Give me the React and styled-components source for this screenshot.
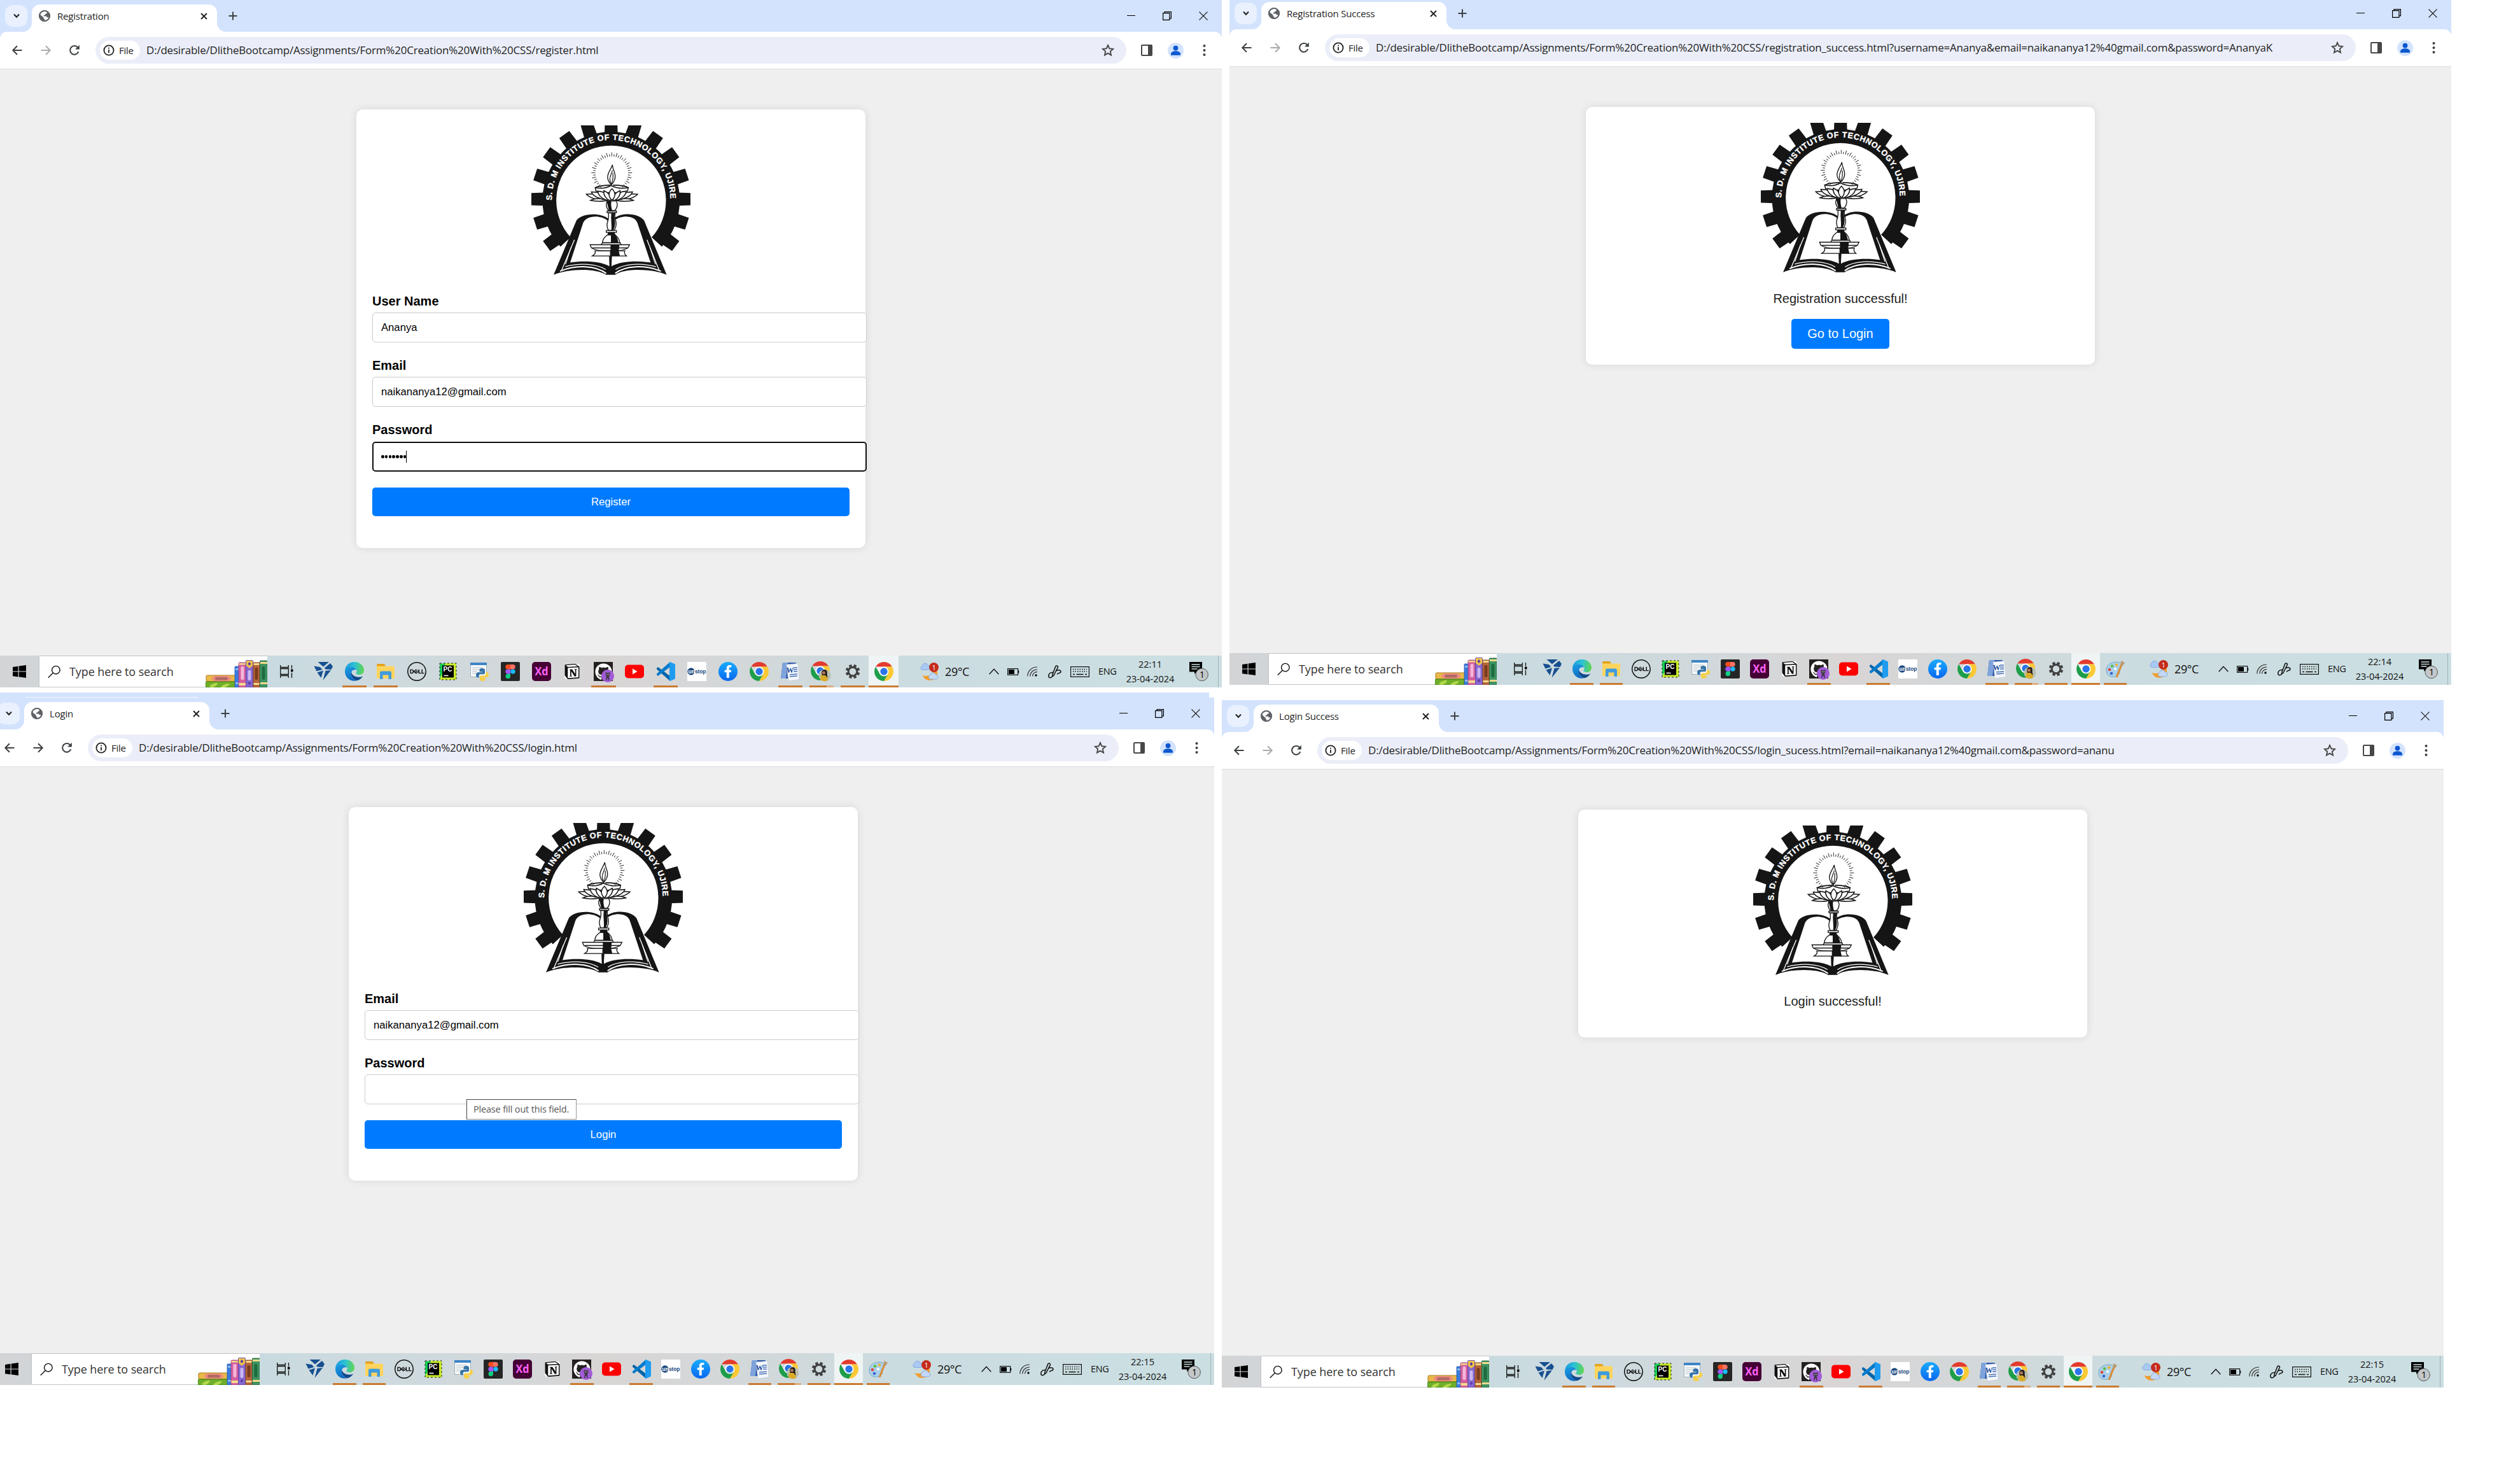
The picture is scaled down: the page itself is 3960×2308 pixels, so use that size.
import React from "react";
import styled, { createGlobalStyle, css } from "styled-components";
import { FaGithub, FaFacebookF } from "react-icons/fa";
import { SiDell, SiNotion } from "react-icons/si";

const ui = `"Open Sans", "Noto Sans", sans-serif`;
const arial = `"Liberation Sans", Arial, sans-serif`;

const Global = createGlobalStyle`
  html, body { margin: 0; background: #fff; overflow: hidden; }
  #root { width: 3960px; height: 2308px; }
`;

const Canvas = styled.main`
  position: relative;
  width: 3960px;
  height: 2308px;
  overflow: hidden;
  background: #fff;
`;

const Desktop = styled.section`
  position: absolute;
  left: ${(p) => p.$x}px;
  top: ${(p) => p.$y}px;
  width: 1920px;
  height: 1080px;
  display: flex;
  flex-direction: column;
  overflow: hidden;
  background: #efefef;
`;

const BackWindow = styled.div`
  position: absolute;
  left: -20px;
  top: 1088px;
  width: 1920px;
  height: 1000px;
  background: #d3e3fd;
`;

const BackTab = styled.div`
  margin: 7px 0 0 60px;
  width: 271px;
  height: 30px;
  background: #f1f6fe;
`;

const Header = styled.header`
  background: #d3e3fd;
  flex: none;
`;

const TabStrip = styled.div`
  display: flex;
  align-items: center;
  height: 50px;
  box-sizing: border-box;
  padding: 0 22px 0 8px;
`;

const TabSearch = styled.div`
  display: flex;
  align-items: center;
  justify-content: center;
  width: 35px;
  height: 34px;
  border-radius: 12px;
  background: #e9f1fe;
`;

const flare = css`
  content: "";
  position: absolute;
  bottom: 0;
  width: 15px;
  height: 15px;
`;

const Tab = styled.div`
  position: relative;
  display: flex;
  align-items: center;
  align-self: flex-end;
  box-sizing: border-box;
  width: 291px;
  height: 43px;
  margin-left: 7px;
  padding: 0 15px 7px 11px;
  border-radius: 13px 13px 0 0;
  background: #fff;
  &::before {
    ${flare}
    left: -15px;
    background: radial-gradient(circle at 0 0, transparent 15px, #fff 15.5px);
  }
  &::after {
    ${flare}
    right: -15px;
    background: radial-gradient(circle at 100% 0, transparent 15px, #fff 15.5px);
  }
`;

const TabTitle = styled.span`
  flex: 1;
  margin-left: 11px;
  font: 15px/20px ${ui};
  letter-spacing: -0.2px;
  color: #1f1f1f;
  white-space: nowrap;
`;

const NewTab = styled.div`
  display: flex;
  margin-left: 18px;
`;

const Controls = styled.div`
  display: flex;
  align-items: center;
  gap: 43px;
  margin-left: auto;
`;

const Toolbar = styled.div`
  display: flex;
  align-items: center;
  box-sizing: border-box;
  height: 59px;
  padding-left: 17px;
  border-radius: 11px 11px 0 0;
  border-bottom: 1px solid #dcdcdc;
  background: #fff;
`;

const NavIcons = styled.div`
  display: flex;
  flex: none;
  gap: 25px;
  width: 133px;
`;

const UrlBar = styled.div`
  display: flex;
  flex: none;
  align-items: center;
  box-sizing: border-box;
  width: 1620px;
  height: 42px;
  padding: 0 19px 0 7px;
  border-radius: 21px;
  background: #ebeef8;
`;

const Chip = styled.div`
  display: flex;
  align-items: center;
  gap: 7px;
  box-sizing: border-box;
  width: 63px;
  height: 30px;
  padding-left: 5px;
  border-radius: 15px;
  background: #fff;
  font: 15px/20px ${ui};
  letter-spacing: -0.3px;
  color: #1f1f1f;
`;

const Url = styled.span`
  flex: 1;
  margin-left: 10px;
  font: 17px/24px ${ui};
  letter-spacing: -0.205px;
  color: #1f1f1f;
  white-space: nowrap;
`;

const ToolIcons = styled.div`
  display: flex;
  flex: none;
  align-items: center;
  gap: 24px;
  margin-left: 23px;
`;

const Page = styled.div`
  display: flex;
  justify-content: center;
  align-items: flex-start;
  flex: 1;
  padding-top: 63px;
  background: #efefef;
`;

const Card = styled.div`
  position: relative;
  display: flex;
  flex-direction: column;
  align-items: ${(p) => (p.$center ? "center" : "stretch")};
  box-sizing: border-box;
  width: 800px;
  padding: 25px;
  border-radius: 10px;
  background: #fff;
  box-shadow: 0 0 13px rgba(0, 0, 0, 0.1);
`;

const LogoBox = styled.div`
  display: flex;
  justify-content: center;
  height: 235px;
  margin-bottom: 30px;
`;

const Field = styled.label`
  display: flex;
  flex-direction: column;
  margin-bottom: 25px;
  font: bold 20px/23px ${arial};
  color: #000;
`;

const Input = styled.span`
  display: flex;
  align-items: center;
  box-sizing: border-box;
  width: 777px;
  height: 47px;
  margin-top: ${(p) => (p.$focus ? 7 : 6)}px;
  padding-left: ${(p) => (p.$focus ? 12 : 13)}px;
  border: ${(p) => (p.$focus ? "2px solid #101010" : "1px solid #ccc")};
  border-radius: 5px;
  background: #fff;
  font: 16.67px/19px ${arial};
  color: #000;
`;

const Dots = styled.span`
  display: flex;
  gap: 1.2px;
  i {
    width: 4.6px;
    height: 4.6px;
    border-radius: 50%;
    background: #000;
  }
`;

const Caret = styled.span`
  width: 1px;
  height: 19px;
  background: #000;
`;

const Button = styled.div`
  display: flex;
  align-items: center;
  justify-content: center;
  box-sizing: border-box;
  height: ${(p) => (p.$link ? 47 : 45)}px;
  width: ${(p) => (p.$link ? "154px" : "auto")};
  padding-bottom: 1px;
  margin-bottom: ${(p) => (p.$link ? 0 : 25)}px;
  border-radius: 5px;
  background: #007bff;
  color: #fff;
  font: ${(p) => (p.$link ? "20px/23px" : "16.67px/19px")} ${arial};
`;

const Message = styled.p`
  margin: 0 0 20px;
  font: 20px/23px ${arial};
  color: #222;
`;

const Tooltip = styled.div`
  position: absolute;
  left: 185px;
  top: 459px;
  display: flex;
  align-items: center;
  box-sizing: border-box;
  width: 173px;
  height: 32px;
  padding: 0 0 1px 10px;
  border: 1px solid;
  border-color: #444 #999 #888 #444;
  background: #fff;
  font: 14.5px/20px ${ui};
  letter-spacing: -0.18px;
  color: #575757;
  white-space: nowrap;
`;

const Taskbar = styled.footer`
  display: flex;
  flex: none;
  height: 50px;
  background: linear-gradient(
    90deg,
    #d3d4d6 0,
    #d1d5d8 60px,
    #c9dbe0 420px,
    #cfd9dd 700px,
    #d9d5d5 960px,
    #d2d8da 1200px,
    #cbdce0 1420px,
    #cbdfe2 1920px
  );
`;

const Start = styled.div`
  display: flex;
  align-items: center;
  width: 61px;
  box-sizing: border-box;
  padding-left: 20px;
`;

const Search = styled.div`
  display: flex;
  align-items: center;
  box-sizing: border-box;
  width: 359px;
  border: 1px solid #c2c2c2;
  border-right: 0;
  padding-left: 13px;
  background: #fff;
  font: 18px/24px ${ui};
  letter-spacing: -0.1px;
  color: #333;
  white-space: nowrap;
`;

const SearchText = styled.span`
  flex: none;
  width: 214px;
  margin-left: 14px;
`;

const TaskView = styled.div`
  display: flex;
  align-items: center;
  width: ${(p) => p.$w}px;
  box-sizing: border-box;
  padding-left: ${(p) => p.$pad}px;
`;

const Apps = styled.div`
  display: flex;
  width: ${(p) => p.$w}px;
`;

const AppSlot = styled.div`
  display: flex;
  align-items: center;
  justify-content: center;
  position: relative;
  flex: none;
  width: ${(p) => p.$w}px;
`;

const IconPlate = styled.div`
  display: flex;
  align-items: center;
  justify-content: center;
  width: ${(p) => (p.$on ? "96%" : "100%")};
  height: 50px;
  background: ${(p) => (p.$on ? "rgba(255,255,255,0.68)" : "transparent")};
`;

const Running = styled.div`
  position: absolute;
  bottom: 0;
  left: ${(p) => (p.$wide ? "2%" : "11%")};
  right: ${(p) => (p.$wide ? "2%" : "11%")};
  height: 3px;
  background: ${(p) =>
    p.$stack ? "linear-gradient(90deg,#ca7a2e 72%,#dcae84 72%)" : "#ca7a2e"};
`;

const Tray = styled.div`
  display: flex;
  align-items: center;
  flex: 1;
`;

const Cell = styled.div`
  display: flex;
  align-items: center;
  flex: none;
  box-sizing: border-box;
  width: ${(p) => p.$w}px;
  padding-left: ${(p) => p.$pad || 0}px;
  white-space: nowrap;
  color: #111;
  font: ${(p) => p.$fs || 15}px/20px ${ui};
  letter-spacing: -0.4px;
`;

const Clock = styled.div`
  display: flex;
  flex: none;
  flex-direction: column;
  align-items: center;
  width: 91px;
  font: 14.5px/23px ${ui};
  color: #111;
`;

const TrayEdge = styled.div`
  width: 1px;
  height: 50px;
  background: #9fb0b3;
`;

/* ---------- browser icons ---------- */

const Svg = ({ w, h, vb, children, ...r }) => (
  <svg width={w} height={h} viewBox={vb || `0 0 ${w} ${h}`} fill="none" display="block" flexShrink="0" {...r}>
    {children}
  </svg>
);

const ChevronDown = () => (
  <Svg w={12} h={8}><path d="M2 1.5 6 5.7 10 1.5" stroke="#1f1f1f" strokeWidth="2" /></Svg>
);
const Globe = () => (
  <Svg w={18} h={18}>
    <circle cx="9" cy="9" r="9" fill="#5f6368" />
    <path d="M7.6 1.9C10.4 1.4 12 2 13 3.4c-.2 1.700-1.200 2.400-2.700 2.600-.2 1.700-1.300 1.700-2.600 1.800v1.700h3.700c1.100.3 1.300 1.100 1.200 2 1.400 0 2-.5 2.800.2-1.100 2.700-3.300 4.200-6 4.500v-1.900c-1.500-.1-2-.9-1.900-2.800L2 6.900C2.700 4.300 4.800 2.300 7.600 1.900Z" fill="#fff" />
    <circle cx="9" cy="9" r="8" stroke="#5f6368" strokeWidth="2" />
    <path d="M2 7.500 7.500 12.600V15C4.500 14.600 1.600 11.600 2 7.500Z" fill="#5f6368" />
  </Svg>
);
const Cross = () => (
  <Svg w={11} h={11}><path d="m1 1 9 9M10 1 1 10" stroke="#1f1f1f" strokeWidth="1.900" /></Svg>
);
const Plus = () => (
  <Svg w={14} h={14}><path d="M7 .5v13M.5 7h13" stroke="#3c4043" strokeWidth="2" /></Svg>
);
const Minimize = () => (
  <Svg w={13} h={14}><path d="M0 6.500h13" stroke="#000" /></Svg>
);
const Restore = () => (
  <Svg w={14} h={14}><path d="M.6 2.600h10.300v10.800H.6zM3 2.500V.6h10.400v10.300h-2.400" stroke="#000" strokeWidth="1.200" /></Svg>
);
const CloseWin = () => (
  <Svg w={14} h={14}><path d="m.5.5 13 13M13.500.5l-13 13" stroke="#222" strokeWidth="1.100" /></Svg>
);
const Arrow = ({ flip, color }) => (
  <Svg w={20} h={20}>
    <path transform={flip ? "translate(20 0) scale(-1 1)" : undefined} d="M17.500 10H3.500M10 3.300 3.300 10l6.700 6.700" stroke={color} strokeWidth="2" />
  </Svg>
);
const Reload = () => (
  <Svg w={20} h={20}>
    <path d="M16.300 12.200A6.800 6.800 0 1 1 15.300 5.600L16.600 7.300" stroke="#3c4043" strokeWidth="2.100" />
    <path d="M17.800 1.800v6.700h-6.700z" fill="#3c4043" />
  </Svg>
);
const Info = () => (
  <Svg w={18} h={18}>
    <circle cx="9" cy="9" r="7.600" stroke="#1f1f1f" strokeWidth="1.800" />
    <path d="M9 8v5M9 4.700v1.900" stroke="#1f1f1f" strokeWidth="1.800" />
  </Svg>
);
const Star = () => (
  <Svg w={20} h={20}>
    <path d="m10 2 2.400 5.300 5.700.6-4.300 3.900 1.200 5.700-5-2.900-5 2.900 1.200-5.700L1.900 7.900l5.700-.6z" stroke="#474747" strokeWidth="1.900" />
  </Svg>
);
const SidePanel = () => (
  <Svg w={18} h={18}>
    <rect x="1" y="1" width="16" height="16" rx="1" stroke="#474747" strokeWidth="2" />
    <path d="M11 0h6v18h-6z" fill="#474747" />
  </Svg>
);
const Avatar = () => (
  <Svg w={25} h={25}>
    <circle cx="12.500" cy="12.500" r="12.500" fill="#d3e3fd" />
    <circle cx="12.500" cy="8.600" r="3.900" fill="#0b57d0" />
    <path d="M5 19.800v-2.300c0-2.900 4-4.300 7.500-4.300s7.500 1.400 7.500 4.300v2.300z" fill="#0b57d0" />
  </Svg>
);
const Menu = () => (
  <Svg w={17} h={20}>
    {[3, 10, 17].map((y) => <circle key={y} cx="8.500" cy={y} r="2" fill="#3c4043" />)}
  </Svg>
);

/* ---------- institute emblem ---------- */

const ink = "#151515";
const teeth = Array.from({ length: 15 }, (_, i) => (i - 7) * 18);
const rays = Array.from({ length: 48 }, (_, i) => i).filter((i) => i < 20 || i > 28);

const Emblem = () => (
  <Svg w={250} h={235} vb="45 51 750 704">
    <defs><path id="ringText" d="M142.060 404A279 279 0 1 1 699.940 404" /></defs>
    {teeth.map((a) => (
      <path key={a} d="M390 88 392 22H450L452 88Z" fill={ink} transform={`rotate(${a} 421 398)`} />
    ))}
    <path d="M206 600A291 291 0 1 1 636 600" stroke={ink} strokeWidth="65" />
    <text fill="#fff" stroke="#fff" strokeWidth="1" fontFamily="Liberation Sans, Arial, sans-serif" fontWeight="700" fontSize="38">
      <textPath href="#ringText" textLength="880" lengthAdjust="spacing">S. D. M INSTITUTE OF TECHNOLOGY, UJIRE</textPath>
    </text>

    {/* halo and flame */}
    {rays.map((i) => (
      <path key={i} d={i % 2 ? "M424 197V186" : "M424 197V178"} stroke={ink} strokeWidth="2.600"
        transform={`rotate(${i * 7.5} 424 274)`} />
    ))}
    <path d="M427 236C420 262 400 275 405 302C408 316 416 324 422 331C432 320 442 306 440 287C438 268 428 258 427 236Z" fill="#fff" stroke={ink} strokeWidth="4" />
    <path d="M427 262C424 280 414 290 415 305C416 315 420 322 422 328M424 326C430 305 431 290 429 275" stroke={ink} strokeWidth="3.500" />

    {/* oil bowl */}
    <path d="M346 344C370 333 395 333 418 332M430 332C460 332 485 334 502 344" stroke={ink} strokeWidth="5" />
    <path d="M346 344C375 350 400 346 420 334C445 346 475 350 502 344L498 360C475 370 380 370 350 360Z" fill="#fff" stroke={ink} strokeWidth="4.500" />

    {/* lotus */}
    {[-1, 1].map((s) => (
      <g key={s} transform={`translate(425 0) scale(${s} 1)`} fill="#fff" stroke={ink} strokeWidth="4.500">
        <path d="M20 396C60 372 95 372 121 375C105 392 65 405 25 405Z" />
        <path d="M18 398C35 395 80 392 102 404C80 410 40 410 18 403Z" />
        <path d="M14 398C35 372 65 364 97 364C90 385 55 400 20 403Z" />
        <path d="M8 400C18 374 40 362 66 360C66 382 42 400 16 404Z" />
        <path d="M4 400C6 380 20 366 38 358C42 378 30 396 10 405Z" />
      </g>
    ))}
    <path d="M425 349C408 365 406 385 425 404C444 385 442 365 425 349Z" fill="#fff" stroke={ink} strokeWidth="4.500" />

    {/* book */}
    <path d="M150 755 257 500C275 466 370 456 413 494H429C465 456 555 464 577 500L683 755C620 725 480 722 440 755H398C350 722 215 725 150 755Z" fill={ink} />
    <path d="M228 697 288 513C300 474 370 470 404 499L414 715C370 690 290 688 228 697Z" fill="#fff" />
    <path d="M607 697 546 513C536 474 470 470 436 499L422 715C465 690 545 688 607 697Z" fill="#fff" />
    <path d="M187 735 248 590M648 735 590 590" stroke="#fff" strokeWidth="4" />
    <path d="M206 705 232 625M630 705 604 625" stroke="#fff" strokeWidth="3.500" />
    <path d="M180 738C260 705 350 712 398 748M656 738C580 705 485 712 440 748" stroke="#fff" strokeWidth="6" />
    <path d="M205 716C275 698 350 702 396 730M632 716C560 698 485 702 442 730" stroke="#fff" strokeWidth="4" />
    <path d="M418 660V740" stroke={ink} strokeWidth="10" />

    {/* lamp stem */}
    <g stroke={ink} strokeWidth="4">
      <path d="M402 407H446L450 420C450 440 442 448 438 452H410C402 444 398 436 398 422Z" fill="#fff" />
      <path d="M402 410C408 425 408 440 414 452H424C420 440 418 420 420 408Z" fill={ink} />
      <path d="M402 454H446V462H402Z" fill="#fff" />
      <path d="M408 463H440C436 480 440 490 444 505C448 525 440 535 436 545H408C400 530 400 515 406 500C410 488 410 478 408 463Z" fill="#fff" />
      <path d="M424 465H436C432 485 438 495 438 512C438 526 434 536 430 543H424C428 520 420 500 424 465Z" fill={ink} />
      <path d="M398 546H446V555H398Z" fill="#fff" />
      <path d="M408 556H436L438 565H406Z" fill={ink} />
      <path d="M403 567H441C455 580 462 590 462 604H380C380 590 388 578 403 567Z" fill="#fff" />
      <path d="M422 567H438C450 580 452 592 453 604H422Z" fill={ink} />
      <path d="M380 604H464L468 614H374Z" fill="#fff" />
      <path d="M322 613H508L500 628C480 640 460 642 440 642H395C365 642 345 638 328 628Z" fill="#fff" />
      <path d="M420 614H458L455 641H420Z" fill={ink} />
      <path d="M332 628H500" />
      <path d="M345 642H486C480 652 486 658 494 666H332C344 658 350 652 345 642Z" fill="#fff" />
      <path d="M418 643H455L460 664H418Z" fill={ink} />
    </g>
  </Svg>
);

/* ---------- taskbar icons ---------- */

const WinLogo = () => (
  <Svg w={21} h={20}>
    <path d="M0 3 8.500 1.700V9.500H0zM9.700 1.500 21 0v9.500H9.700zM0 10.600h8.500v7.900L0 17.200zM9.700 10.600H21V20L9.700 18.500z" fill="#000" />
  </Svg>
);
const Magnifier = () => (
  <Svg w={21} h={21}>
    <circle cx="13.500" cy="7.500" r="6.600" stroke="#111" strokeWidth="1.500" />
    <path d="M8.700 12.300.8 20.200" stroke="#111" strokeWidth="1.500" />
  </Svg>
);
const BooksBox = styled.div`
  display: flex;
  flex: none;
  align-self: flex-end;
  margin-bottom: -1px;
`;
const Books = () => (
  <BooksBox>
    <Svg w={97} h={43}>
      <rect x="1" y="24" width="46" height="10" rx="2" fill="#e9b949" stroke="#a87a1e" />
      <path d="M9 29 14 25H36L41 29 36 33.500H14Z" fill="#f08a80" />
      <rect x="15" y="27" width="20" height="4.500" rx="2" fill="#b06a62" />
      <rect x="0" y="34" width="47" height="9" rx="2" fill="#6fae2a" stroke="#3d7a14" />
      <path d="M6 42C9 37 15 36 19 36 18 40 14 43 10 43ZM24 43C27 38 33 37 38 37 36 41 32 43 28 43Z" fill="#b2d84a" />
      <rect x="46" y="10" width="6.500" height="33" rx="1" fill="#3a7de0" stroke="#1e4fa0" strokeWidth=".7" />
      <path d="M47 13h5v3h-5zM47 35h5v3h-5z" fill="#8db8f4" />
      <rect x="52" y="4" width="11.500" height="39" rx="1.500" fill="#d45fa0" stroke="#923a6c" strokeWidth=".8" />
      <path d="M52.500 5h10.500v2.500h-10.500zM52.500 36h10.500v4h-10.500z" fill="#f4d98b" />
      <rect x="55.500" y="10" width="5" height="21" rx="2" fill="#f5b5d8" />
      <rect x="63.500" y="0.500" width="11" height="42.500" rx="1" fill="#8666cf" stroke="#5b3da2" strokeWidth=".8" />
      <path d="M64 1h10v8l-5 4-5-4z" fill="#f0c34a" />
      <path d="m69 3 2.500 3L69 9l-2.500-3zM69 34l2.500 2.500-2.500 2.500-2.500-2.500z" fill="#5b3da2" />
      <rect x="66.500" y="16" width="5" height="16" rx="2" fill="#c9b6f2" />
      <rect x="75" y="4" width="10" height="39" rx="1" fill="#b7653a" stroke="#7c3d1c" strokeWidth=".8" />
      <path d="M75.500 5h9v3h-9zM75.500 36h9v3h-9z" fill="#f4d98b" />
      <rect x="77.500" y="12" width="5" height="19" rx="2" fill="#7a3c1e" />
      <rect x="85.500" y="1" width="11.500" height="42" rx="1" fill="#3d9462" stroke="#1e5d38" strokeWidth=".8" />
      <path d="M86 3h11v3H86zM86 35h11v3H86z" fill="#f4d98b" />
      <rect x="88.500" y="10" width="5" height="21" rx="2" fill="#1f6b40" />
    </Svg>
  </BooksBox>
);
const TaskViewIcon = () => (
  <Svg w={21} h={20}>
    <path d="M.7 0v3.500h12.600V0M.7 20v-3.500h12.600V20M.7 5.500h12.600v9H.7zM18.500 0v5.500M18.500 12v8" stroke="#111" strokeWidth="1.300" />
    <path d="M17 6.500h3.500v4H17z" fill="#000" />
  </Svg>
);
const Shield = () => (
  <Svg w={30} h={30}>
    <path d="M6.500 0H24L15 7.500ZM26 2l4 5-2.500 5-9-.5L17 9.500ZM.5 6.500 10 8l3.500 4L4.500 14.500ZM5.500 16.500 15 13.500 11.500 25ZM18.500 14l8.500-1L14.500 29Z" fill="#174f90" />
  </Svg>
);
const Edge = () => (
  <Svg w={30} h={30} vb="0 0 32 32">
    <defs>
      <linearGradient id="edgeWave" x1="0" y1="8" x2="32" y2="12" gradientUnits="userSpaceOnUse"><stop stopColor="#1f9be0" /><stop offset=".5" stopColor="#2cc3d2" /><stop offset="1" stopColor="#62d64e" /></linearGradient>
      <linearGradient id="edgeBody" x1="4" y1="8" x2="16" y2="32" gradientUnits="userSpaceOnUse"><stop stopColor="#1b9de2" /><stop offset="1" stopColor="#0b63bf" /></linearGradient>
    </defs>
    <path d="M0 16C0 6 7 0 16 0s16 6.500 16 13.500c0 5-3.500 8-8 8-4 0-5.500-1.500-5.500-2.500s1.500-1.500 1.500-4c0-3-3-5.500-8-5.500C5 9.500 1 12.500 0 16Z" fill="url(#edgeWave)" />
    <path d="M0 16c.5-5 5-8 10-7.500 5 0 8 2 9.500 5-5-1.500-9 1-9 6.500 0 6 5 11 10 11.300C9 34 0 26 0 16Z" fill="url(#edgeBody)" />
    <path d="M11 17c-2 7 3 13 9.500 14.300 4-1 7.500-4 9.500-7.300-2 1-4.500 1.500-7.500 1.300C16 25 11.500 21.500 11 17Z" fill="#114a8b" />
  </Svg>
);
const Folder = () => (
  <Svg w={28} h={24}>
    <path d="M0 1.500Q0 0 1.500 0H12l2 4H0z" fill="#e3a21a" />
    <path d="M0 3.500h26q2 0 2 2V22q0 1-1 1H1q-1 0-1-1z" fill="#ffd45e" />
    <path d="M5 24V14q0-2.500 2.500-2.500h13Q23 11.500 23 14v10h-4.500v-6.500h-9V24z" fill="#3f9bdc" />
  </Svg>
);
const DellIcon = () => <SiDell size={30} color="#111" />;
const PyCharm = () => (
  <Svg w={28} h={28}>
    <path d="M1 2h12L5 26H1z" fill="#21d789" /><path d="M8 1h19v26H1z" fill="#c9ea2c" /><path d="M1 2l9-1-6 20-3 1z" fill="#19cf54" />
    <rect x="1" y="1" width="26" height="26" stroke="#1c2a10" strokeDasharray="3 3" />
    <rect x="5" y="4.500" width="18" height="19" fill="#000" />
    <text x="6.500" y="14" fontFamily="Liberation Sans, Arial, sans-serif" fontWeight="700" fontSize="10" fill="#fff">PC</text>
    <path d="M7.500 20.500h7" stroke="#fff" strokeWidth="1.600" />
  </Svg>
);
const PyFile = () => (
  <Svg w={30} h={29}>
    <rect x="1.500" y=".5" width="25" height="22" fill="#f5f7f8" stroke="#9fb3c1" />
    <path d="M1 0h26v4H1z" fill="#3d84c6" />
    <path d="M4 8h17M4 11h14M4 14h7M4 17h6" stroke="#b9c4cc" />
    <path d="M19.500 9c-3 0-4 1-4 3v2.500h5v.8h-7c-2.500 0-3.500 2-3.500 4.200s1 4 3 4h1.500v-2.500c0-1.500 1-2.700 2.700-2.700h4.600c1.300 0 2.200-1 2.200-2.300V12c0-2-1.500-3-4.500-3z" fill="#3572a5" />
    <path d="M20.500 29c3 0 4-1 4-3v-2h-5v-.8h7c2.500 0 3.500-2 3.500-4s-1-4-3-4h-1.500v2.500c0 1.500-1 2.700-2.700 2.700h-4.600c-1.300 0-2.200 1-2.200 2.300V26c0 2 1.500 3 4.500 3z" fill="#f7d044" />
  </Svg>
);
const Figma = () => (
  <Svg w={30} h={30}>
    <rect width="30" height="30" rx="2" fill="#262626" />
    <path d="M15 4h-4a3.700 3.700 0 0 0 0 7.400h4z" fill="#f24e1e" /><path d="M15 4h4a3.700 3.700 0 0 1 0 7.400h-4z" fill="#ff7262" />
    <path d="M15 11.400h-4a3.700 3.700 0 0 0 0 7.400h4z" fill="#a259ff" /><circle cx="19" cy="15.100" r="3.700" fill="#1abcfe" />
    <path d="M11 18.800h4v3.700a3.700 3.700 0 1 1-4-3.700z" fill="#0acf83" />
  </Svg>
);
const Xd = () => (
  <Svg w={30} h={30}>
    <rect width="30" height="30" rx="5" fill="#450135" />
    <text x="15" y="21.300" textAnchor="middle" fontFamily="Open Sans, sans-serif" fontWeight="700" fontSize="17" fill="#ff61f6" textLength="21" lengthAdjust="spacingAndGlyphs">Xd</text>
  </Svg>
);
const NotionPlate = styled.div`
  display: flex;
  border-radius: 4px;
  background: #fff;
`;
const Notion = () => <NotionPlate><SiNotion size={24} color="#111" /></NotionPlate>;
const GhBox = styled.div`
  position: relative;
  display: flex;
  align-items: center;
  justify-content: center;
  width: 30px;
  height: 30px;
  background: #24201f;
`;
const GhBadge = styled.div`
  position: absolute;
  right: -2px;
  bottom: -2px;
  width: 20px;
  height: 20px;
  display: flex;
  align-items: center;
  justify-content: center;
  border-radius: 50%;
  background: #a25bd8;
`;
const GitHub = () => (
  <GhBox>
    <FaGithub size={27} color="#fff" />
    <GhBadge>
      <Svg w={12} h={15}>
        <path d="M2.500 1 4.500 2h3l2-1v5L8 7.500l1 6.500H7v-3H5v3H3l1-6.500L2.500 6z" fill="#453a4b" />
        <path d="M3.800 4.500h1.700M6.500 4.500h1.700" stroke="#c9c0d0" />
      </Svg>
    </GhBadge>
  </GhBox>
);
const YouTube = () => (
  <Svg w={30} h={22}>
    <rect width="30" height="21" y=".5" rx="5" fill="#f00" /><path d="m12 6.500 7.500 4.500L12 15.500z" fill="#fff" />
  </Svg>
);
const VsCode = () => (
  <Svg w={30} h={30}>
    <path d="M1 9.500 3 8l20 15-1 7L1 11.500z" fill="#0065a9" /><path d="M1 20.500 3 22 23 7l-1-7L1 18.500z" fill="#007acc" />
    <path d="M22 0 30 3.500v23L22 30c-.5 0-1-.5-1-1V1c0-.5.500-1 1-1z" fill="#1f9cf0" />
  </Svg>
);
const Unstop = () => (
  <Svg w={30} h={30}>
    <path d="M0 0h30v30H0z" fill="#fff" /><circle cx="6" cy="15" r="5.700" fill="#1c4980" />
    <text x="1.500" y="17.500" fontFamily="Liberation Sans, Arial, sans-serif" fontWeight="700" fontSize="8.500" fill="#fff">un</text>
    <text x="12" y="17.500" fontFamily="Liberation Sans, Arial, sans-serif" fontWeight="700" fontSize="8.500" fill="#1c4980" textLength="17.500">stop</text>
  </Svg>
);
const FbCircle = styled.div`
  display: flex;
  align-items: flex-end;
  justify-content: center;
  box-sizing: border-box;
  width: 30px;
  height: 30px;
  padding-bottom: 5px;
  border-radius: 50%;
  background: linear-gradient(#19acfe, #0866ef);
`;
const Facebook = () => <FbCircle><FaFacebookF size={20} color="#fff" /></FbCircle>;
const ChromeArt = () => (
  <>
    <path d="M2.010 7.500A15 15 0 0 1 27.990 7.500H15Z" fill="#e33b2e" />
    <path d="M27.990 7.500A15 15 0 0 1 15 30L21.500 18.750 15 7.500Z" fill="#fcc934" />
    <path d="M2.010 7.500A15 15 0 0 0 15 30L21.500 18.750H8.500Z" fill="#1e9e4a" />
    <circle cx="15" cy="15" r="7.500" fill="#fff" /><circle cx="15" cy="15" r="5.700" fill="#2a75e8" />
  </>
);
const Chrome = () => <Svg w={30} h={30}><ChromeArt /></Svg>;
const ChromeUser = () => (
  <Svg w={33} h={32}>
    <ChromeArt />
    <circle cx="22" cy="22" r="9.500" fill="#b9bfae" />
    <path d="M15 28.500c0-6 3-9.500 6-9.500s6 4 5.500 11a9.500 9.500 0 0 1-11.500-1.500z" fill="#d9ac28" />
    <path d="M18 22c-2-5 0-9 3.500-9s5 3 4 7l1 6-3.500-4z" fill="#221a18" /><circle cx="20.500" cy="18" r="2.600" fill="#a9765a" />
  </Svg>
);
const Word = () => (
  <Svg w={30} h={29}>
    <path d="M3 0h21l-4 25H0z" fill="#2f5aa8" /><path d="M3 0h8L8 25H0z" fill="#7ea3dc" />
    <path d="m9 3 18-1.500 2 25L12 29z" fill="#f4f7fb" stroke="#b9c6da" strokeWidth=".6" />
    <path d="M20 8h6M20 11h6M20 14h6M14 19l12-1M14 22l12-1" stroke="#4a72b8" strokeWidth="1.600" />
    <text x="8.500" y="15.500" fontFamily="Liberation Serif, serif" fontWeight="700" fontSize="12" fill="#214c9c">W</text>
  </Svg>
);
const Gear = () => (
  <Svg w={24} h={24}>
    {Array.from({ length: 8 }, (_, i) => <path key={i} d="M9.800.8h4.400v4H9.800z" fill="#414141" transform={`rotate(${i * 45 + 22.5} 12 12)`} />)}
    <circle cx="12" cy="12" r="6.800" stroke="#414141" strokeWidth="3" />
  </Svg>
);
const Paint = () => (
  <Svg w={30} h={29}>
    <path d="M1 17C0 8 8 3 17 3c5 0 8 3 7 6s-3 3-3 6c0 4 2 6-2 9-5 4-17 4-18-7z" fill="#a9d0ea" stroke="#7aa7c6" />
    <circle cx="6" cy="15" r="2.300" fill="#e0443a" /><circle cx="10" cy="9.500" r="2.300" fill="#5cbf46" /><circle cx="17" cy="7.500" r="2.300" fill="#f0b332" /><circle cx="9" cy="21" r="2.300" fill="#3a66cf" /><circle cx="15" cy="14" r="2" fill="#fff" />
    <path d="m25 7-8 20" stroke="#d98a34" strokeWidth="3" /><path d="m23.500 6 .5-5 6 3-3.500 5z" fill="#bb9a72" />
  </Svg>
);
const Weather = () => (
  <Svg w={30} h={29}>
    <path d="M22 6c2 9-3 15-12 15-2 0-4-.5-5.500-1C7 25 11 28 16 28c7 0 12-5 12-12 0-4-2-8-6-10z" fill="#f39c2b" />
    <path d="M4 11.500a3.500 3.500 0 0 1 0-6.500 5 5 0 0 1 9.500-.5 3.600 3.600 0 0 1 1 7z" fill="#a9c8f2" stroke="#7ea4dd" strokeWidth=".8" />
    <path d="M16.500 26a3.500 3.500 0 0 1 0-6.500 4.700 4.700 0 0 1 9-.5 3.600 3.600 0 0 1 1 7z" fill="#c3d8f6" stroke="#7ea4dd" strokeWidth=".8" />
    <circle cx="22.500" cy="7.500" r="7.500" fill="#c42b1c" />
    <text x="22.500" y="11.500" textAnchor="middle" fontFamily="Open Sans, sans-serif" fontSize="11" fill="#fff">1</text>
  </Svg>
);
const TrayChevron = () => <Svg w={16} h={10}><path d="m.7 9.200 7.300-8 7.300 8" stroke="#111" strokeWidth="1.400" /></Svg>;
const Battery = () => (
  <Svg w={19} h={11}><rect x=".6" y=".6" width="16" height="9.800" stroke="#111" strokeWidth="1.200" /><path d="M2 2h9v7H2z" fill="#000" /><path d="M17.500 3.500v4" stroke="#111" strokeWidth="1.600" /></Svg>
);
const Wifi = () => (
  <Svg w={17} h={16}>
    <path d="M.8 15.500C.8 7.500 7 1 16 1M4.800 15.500C4.800 9.500 9.500 5 16 5M8.600 15.500C8.600 11.500 11.500 8.700 16 8.700" stroke="#333" strokeWidth="1.200" /><circle cx="14" cy="14" r="1.700" fill="#000" />
  </Svg>
);
const Pen = () => (
  <Svg w={21} h={21}>
    <path d="M12 1.500c1.500-1 3.500-.3 3.500 1.500L9 16l-2.500 2 .5-3.500zM7.500 11.500C3 11 .8 14 .8 17c0 3.500 4 3.500 5.200 1M12 9.500c3-3 8-2 8 1-.5 2.500-3 1-6 4" stroke="#111" strokeWidth="1.500" />
  </Svg>
);
const Keyboard = () => (
  <Svg w={30} h={17}>
    <rect x=".6" y=".6" width="28.800" height="15.800" stroke="#111" strokeWidth="1.200" />
    <path d="M4 4.500h22M4 8h22" stroke="#111" strokeWidth="1.300" strokeDasharray="1.500 2" /><path d="M4 12.500h3M9.500 12.500h11M23 12.500h3" stroke="#111" strokeWidth="1.300" />
  </Svg>
);
const Notice = () => (
  <Svg w={30} h={31}>
    <path d="M0 0h20v15.500h-8L8 19v-3.500H0z" fill="#000" /><path d="M3.500 4h13M3.500 7.500h13M3.500 11h9" stroke="#cfe0e3" strokeWidth="1.300" />
    <circle cx="19.700" cy="20" r="9.700" fill="#c3c7c9" stroke="#555" />
    <text x="19.700" y="25" textAnchor="middle" fontFamily="Open Sans, sans-serif" fontSize="14" fill="#000">1</text>
  </Svg>
);

const apps = [
  [Shield], [Edge, 1], [Folder, 1], [DellIcon], [PyCharm], [PyFile], [Figma], [Xd], [Notion],
  [GitHub, 1], [YouTube], [VsCode, 1], [Unstop], [Facebook], [Chrome], [Word, 1],
  [ChromeUser, 1, "stack"], [Gear, 1], [Chrome, 1, "active"],
];

const TaskbarRow = ({ time, paint }) => {
  const list = paint ? [...apps, [Paint, 1]] : apps;
  const pitch = paint ? 46.6 : 48.94;
  const lead = paint ? 63.7 : 63.5;
  return (
    <Taskbar>
      <Start><WinLogo /></Start>
      <Search><Magnifier /><SearchText>Type here to search</SearchText><Books /></Search>
      <TaskView $w={lead} $pad={paint ? 27 : 20}><TaskViewIcon /></TaskView>
      <Apps $w={1025 - lead}>
        {list.map(([Icon, on, kind], i) => (
          <AppSlot key={i} $w={pitch}>
            <IconPlate $on={kind === "active"}><Icon /></IconPlate>
            {on && <Running $wide={kind === "active"} $stack={kind === "stack"} />}
          </AppSlot>
        ))}
      </Apps>
      <Tray>
        <Cell $w={40}><Weather /></Cell>
        <Cell $w={69} $fs={18}>29°C</Cell>
        <Cell $w={29}><TrayChevron /></Cell>
        <Cell $w={31}><Battery /></Cell>
        <Cell $w={33}><Wifi /></Cell>
        <Cell $w={35}><Pen /></Cell>
        <Cell $w={44}><Keyboard /></Cell>
        <Cell $w={36} $fs={14.5}>ENG</Cell>
        <Clock><span>{time}</span><span>23-04-2024</span></Clock>
        <Cell $w={61} $pad={16}><Notice /></Cell>
        <TrayEdge />
      </Tray>
    </Taskbar>
  );
};

const Browser = ({ x, y, title, url, forward, time, paint, children }) => (
  <Desktop $x={x} $y={y}>
    <Header>
      <TabStrip>
        <TabSearch><ChevronDown /></TabSearch>
        <Tab><Globe /><TabTitle>{title}</TabTitle><Cross /></Tab>
        <NewTab><Plus /></NewTab>
        <Controls><Minimize /><Restore /><CloseWin /></Controls>
      </TabStrip>
      <Toolbar>
        <NavIcons><Arrow color="#3c4043" /><Arrow flip color={forward ? "#3c4043" : "#a9abae"} /><Reload /></NavIcons>
        <UrlBar><Chip><Info />File</Chip><Url>{url}</Url><Star /></UrlBar>
        <ToolIcons><SidePanel /><Avatar /><Menu /></ToolIcons>
      </Toolbar>
    </Header>
    <Page>{children}</Page>
    <TaskbarRow time={time} paint={paint} />
  </Desktop>
);

const base = "D:/desirable/DlitheBootcamp/Assignments/Form%20Creation%20With%20CSS/";

export default function App() {
  return (
    <Canvas>
      <Global />
      <Browser x={0} y={0} title="Registration" url={base + "register.html"} time="22:11">
        <Card>
          <LogoBox><Emblem /></LogoBox>
          <Field>User Name<Input>Ananya</Input></Field>
          <Field>Email<Input>naikananya12@gmail.com</Input></Field>
          <Field>Password
            <Input $focus><Dots>{Array.from({ length: 7 }, (_, i) => <i key={i} />)}</Dots><Caret /></Input>
          </Field>
          <Button>Register</Button>
        </Card>
      </Browser>
      <Browser x={1932} y={-4} title="Registration Success" url={base + "registration_success.html?username=Ananya&email=naikananya12%40gmail.com&password=AnanyaK"} time="22:14" paint>
        <Card $center>
          <LogoBox><Emblem /></LogoBox>
          <Message>Registration successful!</Message>
          <Button $link>Go to Login</Button>
        </Card>
      </Browser>
      <BackWindow><BackTab /></BackWindow>
      <Browser x={-12} y={1096} title="Login" url={base + "login.html"} forward time="22:15" paint>
        <Card>
          <LogoBox><Emblem /></LogoBox>
          <Field>Email<Input>naikananya12@gmail.com</Input></Field>
          <Field>Password<Input /></Field>
          <Button>Login</Button>
          <Tooltip>Please fill out this field.</Tooltip>
        </Card>
      </Browser>
      <Browser x={1920} y={1100} title="Login Success" url={base + "login_sucess.html?email=naikananya12%40gmail.com&password=ananu"} time="22:15" paint>
        <Card $center>
          <LogoBox><Emblem /></LogoBox>
          <Message>Login successful!</Message>
        </Card>
      </Browser>
    </Canvas>
  );
}
